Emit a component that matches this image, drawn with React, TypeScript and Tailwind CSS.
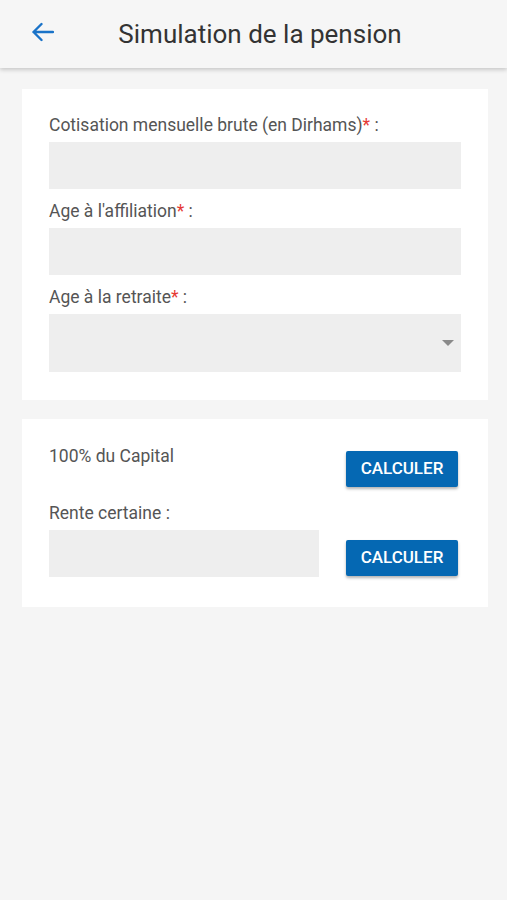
import React from "react";

export default function App() {
  const font = { fontFamily: "Roboto, 'Noto Sans', sans-serif" };
  return (
    <div className="min-h-[900px] w-full bg-[#f5f5f5]" style={font}>
      <header className="relative flex h-[68px] items-center bg-[#f6f6f6] shadow-[0_2px_4px_rgba(0,0,0,0.18)]">
        <div className="absolute left-[31px] top-[22px]">
          <svg width="23" height="20" viewBox="0 0 23 20" fill="none">
            <path d="M22 10H2.5M10.5 2L2.5 10L10.5 18" stroke="#1a73c8" strokeWidth="2.4" strokeLinecap="round" strokeLinejoin="round" />
          </svg>
        </div>
        <h1 className="w-full pl-[13px] text-center text-[26px] font-normal text-[#333]">Simulation de la pension</h1>
      </header>

      <div className="px-[22px] pt-[21px] pr-[19px]">
        <div className="bg-white px-[27px] pt-[25px] pb-[28px]">
          <label className="block text-[17.5px] leading-[23px] text-[#555]">
            Cotisation mensuelle brute (en Dirhams)<span className="text-[#e53935]">*</span> :
          </label>
          <div className="mt-[5px] h-[47px] w-[412px] bg-[#eeeeee]" />
          <label className="mt-[11px] block text-[17.5px] leading-[23px] text-[#555]">
            Age à l'affiliation<span className="text-[#e53935]">*</span> :
          </label>
          <div className="mt-[5px] h-[47px] w-[412px] bg-[#eeeeee]" />
          <label className="mt-[11px] block text-[17.5px] leading-[23px] text-[#555]">
            Age à la retraite<span className="text-[#e53935]">*</span> :
          </label>
          <div className="mt-[5px] flex h-[58px] w-[412px] items-center justify-end bg-[#eeeeee] pr-[7px]">
            <svg width="12" height="6" viewBox="0 0 12 6">
              <path d="M0 0H12L6 6Z" fill="#8a8a8a" />
            </svg>
          </div>
        </div>

        <div className="mt-[19px] bg-white px-[27px] pt-[26px] pb-[30px]">
          <div className="flex items-start justify-between">
            <div className="text-[17.5px] leading-[22px] text-[#555]">100% du Capital</div>
            <button className="mr-[3px] mt-[6px] flex h-[36px] w-[112px] items-center justify-center rounded-[2px] bg-[#0568b3] text-[17px] font-medium text-white shadow-[0_2px_3px_rgba(0,0,0,0.3)]">
              CALCULER
            </button>
          </div>
          <div className="mt-[15px] text-[17.5px] leading-[23px] text-[#555]">Rente certaine :</div>
          <div className="flex items-start justify-between">
            <div className="mt-[5px] h-[47px] w-[270px] bg-[#eeeeee]" />
            <button className="mr-[3px] mt-[15px] flex h-[36px] w-[112px] items-center justify-center rounded-[2px] bg-[#0568b3] text-[17px] font-medium text-white shadow-[0_2px_3px_rgba(0,0,0,0.3)]">
              CALCULER
            </button>
          </div>
        </div>
      </div>
    </div>
  );
}
